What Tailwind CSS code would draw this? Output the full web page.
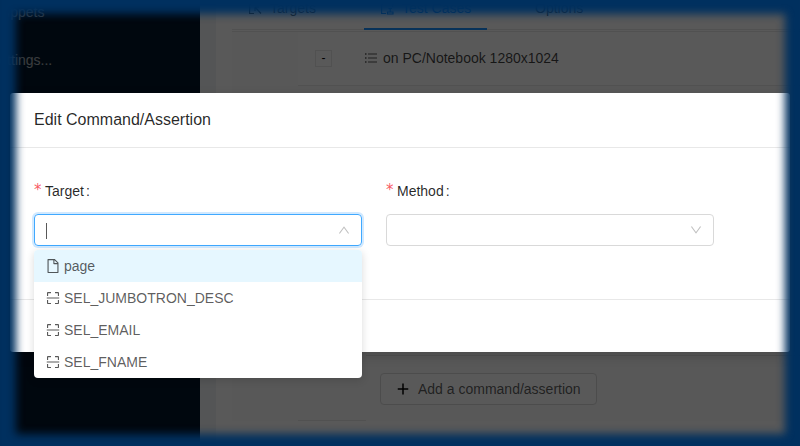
<!DOCTYPE html>
<html lang="en">
<head>
<meta charset="utf-8">
<title>Edit Command/Assertion</title>
<script src="https://cdn.jsdelivr.net/npm/@tailwindcss/browser@4"></script>
</head>
<body class="relative h-[446px] w-[800px] overflow-hidden bg-white font-['Liberation_Sans',Arial,sans-serif] text-sm text-black/65">
<svg class="hidden">
  <symbol id="scan" viewBox="64 64 896 896"><path d="M136 384h56c4.400 0 8-3.600 8-8V200h176c4.400 0 8-3.600 8-8v-56c0-4.400-3.600-8-8-8H196c-37.600 0-68 30.400-68 68v180c0 4.400 3.600 8 8 8zm512-184h176v176c0 4.400 3.600 8 8 8h56c4.400 0 8-3.600 8-8V196c0-37.600-30.400-68-68-68H648c-4.400 0-8 3.600-8 8v56c0 4.400 3.600 8 8 8zM376 824H200V648c0-4.400-3.600-8-8-8h-56c-4.400 0-8 3.600-8 8v180c0 37.600 30.400 68 68 68h180c4.400 0 8-3.600 8-8v-56c0-4.400-3.600-8-8-8zm512-184h-56c-4.400 0-8 3.600-8 8v176H648c-4.400 0-8 3.600-8 8v56c0 4.400 3.600 8 8 8h180c37.600 0 68-30.400 68-68V648c0-4.400-3.600-8-8-8zm16-164H120c-4.400 0-8 3.600-8 8v56c0 4.400 3.600 8 8 8h784c4.400 0 8-3.600 8-8v-56c0-4.400-3.600-8-8-8z"/></symbol>
  <symbol id="down" viewBox="64 64 896 896"><path d="M884 256h-75c-5.100 0-9.900 2.500-12.900 6.600L512 654.200 227.900 262.600c-3-4.100-7.800-6.600-12.900-6.600h-75c-6.500 0-10.300 7.400-6.500 12.700l352.600 486.100c12.800 17.600 39 17.600 51.700 0l352.600-486.100c3.900-5.300.1-12.700-6.400-12.700z"/></symbol>
</svg>

<!-- Page behind the dialog -->
<div class="flex h-full w-full">
  <aside class="w-[200px] shrink-0 overflow-hidden bg-[#001529] text-white/65">
    <div class="-ml-2.5 -mt-2 flex flex-col gap-2">
      <div class="h-10 leading-10">Snippets</div>
      <div class="h-10 leading-10">Settings...</div>
    </div>
  </aside>
  <div class="w-4 shrink-0 bg-[#f0f2f5]"></div>
  <main class="flex min-w-0 flex-1 flex-col pl-4">
    <nav class="flex h-[30px] shrink-0 border-b border-[#e8e8e8]">
      <div class="flex h-[30px] w-[132px] items-start pl-4">
        <svg class="mt-[1px] size-3.5 shrink-0" viewBox="0 0 14 14" fill="none" stroke="currentColor" stroke-width="1.2"><path d="M6 1.500H1.600v11H6M7 6l6 6.500M7 6v4M7 6h4"/></svg>
        <span class="ml-2 leading-4">Targets</span>
      </div>
      <div class="flex h-[30px] w-[123px] items-start border-b-2 border-[#1890ff] pl-4 text-[#1890ff]">
        <svg class="mt-[1px] size-3.5 shrink-0" viewBox="0 0 14 14" fill="none" stroke="currentColor" stroke-width="1.200"><path d="M6 12.500H1.600v-11h11V6M7.500 13h5.500v-2H7.500zM10.200 11V7.500M8.500 7.500h3.500"/></svg>
        <span class="ml-2 leading-4">Test Cases</span>
      </div>
      <div class="ml-12 leading-4">Options</div>
    </nav>
    <section class="mt-px flex flex-1 flex-col border-t border-[#e8e8e8]">
      <div class="flex h-[54px] shrink-0">
        <div class="w-[66px] bg-[#fbfbfb]"></div>
        <div class="flex flex-1 items-center border-b border-[#e8e8e8] pb-px">
          <div class="ml-[17px] flex size-[17px] items-center justify-center border border-[#e8e8e8] text-xs text-black">-</div>
          <svg class="ml-8 size-3.5" viewBox="0 0 14 14" fill="currentColor"><path d="M4 2.500h9v1H4zM4 6.500h9v1H4zM4 10.500h9v1H4zM1 2.300h1.500v1.500H1zM1 6.300h1.500v1.500H1zM1 10.300h1.500v1.500H1z"/></svg>
          <span class="ml-[5px] pb-px text-black/75">on PC/Notebook 1280x1024</span>
        </div>
      </div>
      <div class="flex h-[335px] shrink-0">
        <div class="w-[66px] bg-[#fbfbfb]"></div>
        <div class="w-[68px] border-b border-[#e8e8e8] bg-[#fbfbfb]"></div>
        <div class="flex flex-1 flex-col bg-[#fbfbfb]">
          <div class="h-[270px] border-b border-[#e8e8e8]"></div>
          <div class="ml-3.5 mt-[17px] flex h-8 w-[217px] items-center rounded border border-[#d9d9d9] bg-white pl-[15px]">
            <svg class="size-3.5 text-black" viewBox="0 0 14 14" fill="currentColor"><path d="M6.250 1.500h1.500v4.800h4.500v1.500h-4.500v4.800h-1.500V7.800h-4.500V6.300h4.500z"/></svg>
            <span class="ml-2">Add a command/assertion</span>
          </div>
        </div>
      </div>
    </section>
  </main>
</div>
<div class="absolute inset-0 bg-black/65"></div>

<!-- Dialog -->
<div class="absolute left-2.5 top-[93px] flex h-[259px] w-[780px] flex-col rounded-[3px] bg-white shadow-[0_4px_12px_rgba(0,0,0,0.15)]">
  <header class="h-[55px] border-b border-[#e8e8e8] px-6 text-base leading-[54px] text-black/85">Edit Command/Assertion</header>
  <div class="flex h-[151px] gap-6 px-6 pt-8">
    <div class="w-[328px]">
      <div class="flex h-[22px] items-center text-black/85"><span class="mr-1 w-[7px] font-['DejaVu_Sans',sans-serif] text-[15px] text-[#f5222d]/75">*</span><span>Target</span><span class="-mt-px ml-0.5">:</span></div>
      <div class="mt-3 flex h-8 items-center justify-between rounded border border-[#40a9ff] px-[11px] shadow-[0_0_0_2px_rgba(24,144,255,0.2)]">
        <span class="mt-0.5 h-4 w-px bg-black/65"></span>
        <svg class="size-3 rotate-180 text-black/25" fill="currentColor"><use href="#down"/></svg>
      </div>
    </div>
    <div class="w-[328px]">
      <div class="flex h-[22px] items-center text-black/85"><span class="mr-1 w-[7px] font-['DejaVu_Sans',sans-serif] text-[15px] text-[#f5222d]/75">*</span><span>Method</span><span class="-mt-px ml-0.5">:</span></div>
      <div class="mt-3 flex h-8 items-center justify-end rounded border border-[#d9d9d9] px-[11px]">
        <svg class="size-3 text-black/25" fill="currentColor"><use href="#down"/></svg>
      </div>
    </div>
  </div>
  <footer class="mt-auto h-[53px] border-t border-[#e8e8e8]"></footer>
</div>

<!-- Target options -->
<ul class="absolute left-[34px] top-[250px] w-[328px] overflow-hidden rounded bg-white shadow-[0_2px_8px_rgba(0,0,0,0.15)]">
  <li class="flex h-8 items-center gap-1 bg-[#e6f7ff] px-3">
    <svg class="size-3.5" viewBox="64 64 896 896" fill="currentColor"><path d="M854.600 288.600L639.400 73.400c-6-6-14.100-9.400-22.600-9.400H192c-17.700 0-32 14.300-32 32v832c0 17.700 14.300 32 32 32h640c17.700 0 32-14.300 32-32V311.300c0-8.500-3.400-16.700-9.400-22.700zM790.200 326H602V137.800L790.200 326zm1.800 562H232V136h302v216a42 42 0 0 0 42 42h216v494z"/></svg>page</li>
  <li class="flex h-8 items-center gap-1 px-3"><svg class="size-3.5" fill="currentColor"><use href="#scan"/></svg>SEL_JUMBOTRON_DESC</li>
  <li class="flex h-8 items-center gap-1 px-3"><svg class="size-3.5" fill="currentColor"><use href="#scan"/></svg>SEL_EMAIL</li>
  <li class="flex h-8 items-center gap-1 px-3"><svg class="size-3.5" fill="currentColor"><use href="#scan"/></svg>SEL_FNAME</li>
</ul>

<!-- Soft blue frame -->
<div class="pointer-events-none absolute -bottom-1 -right-px -top-0.5 left-0 shadow-[inset_0_0_8px_16px_#00305f]"></div>
</body>
</html>
